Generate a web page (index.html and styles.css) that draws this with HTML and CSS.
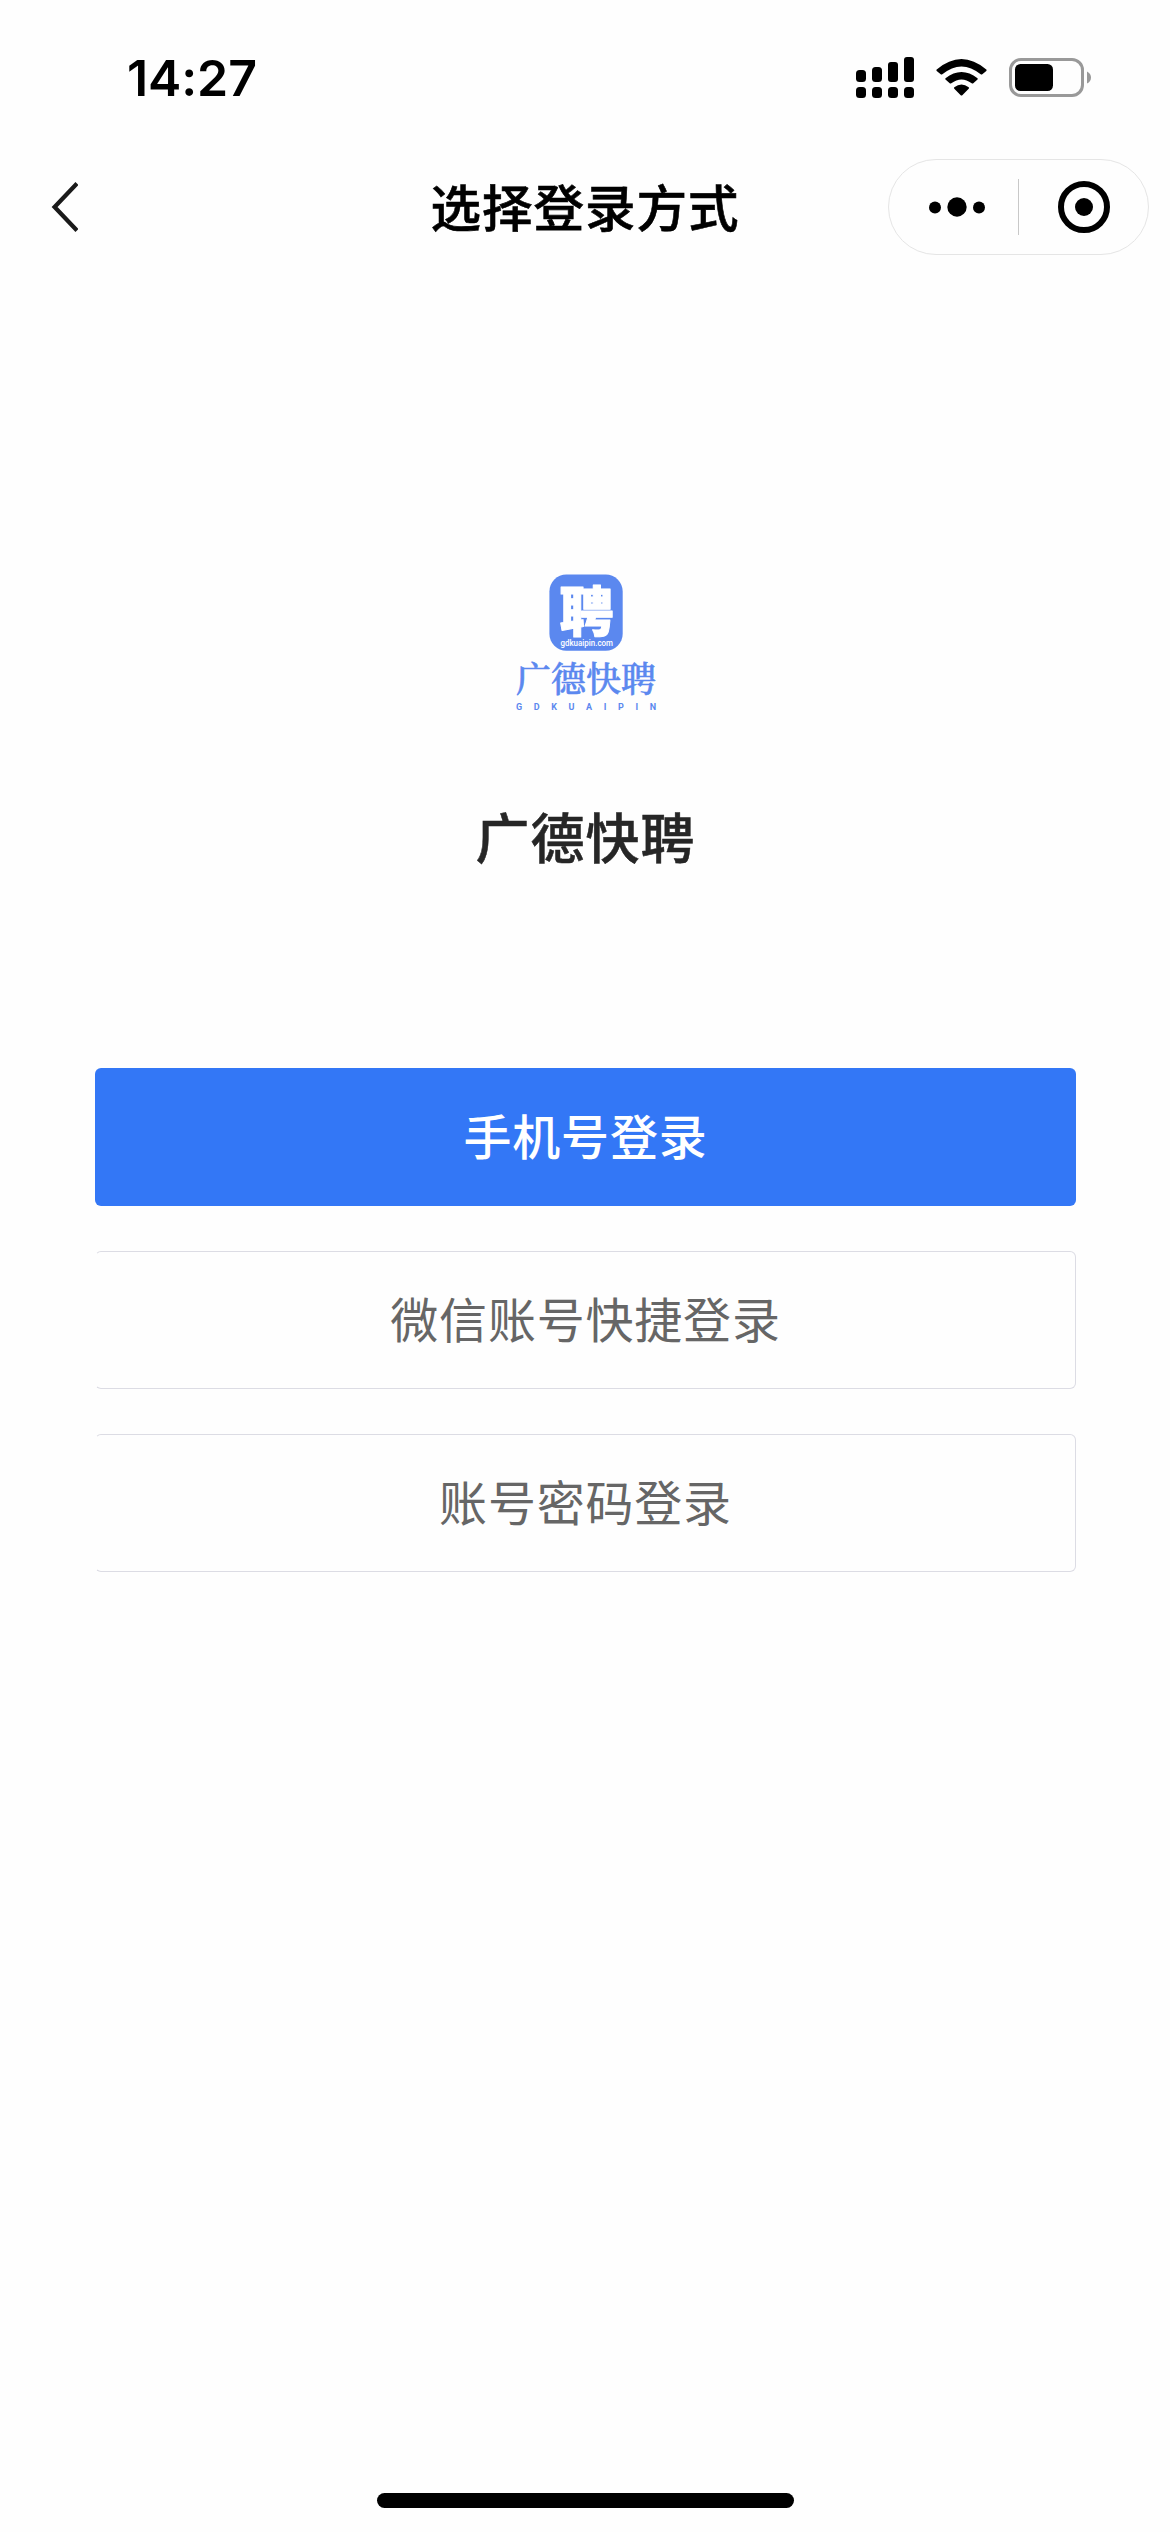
FILE: index.html
```html
<!DOCTYPE html>
<html lang="zh-CN">
<head>
<meta charset="utf-8">
<title>选择登录方式</title>
<link rel="stylesheet" href="styles.css">
</head>
<body>
<div class="screen">
  <header class="status-bar">
    <span class="time">14:27</span>
    <svg class="status-icons" width="240" height="50" viewBox="854 52 240 50">
      <g>
        <rect x="856" y="70" width="10" height="12" rx="3.5"/>
        <rect x="872" y="67" width="10" height="15" rx="3.5"/>
        <rect x="888" y="62" width="10" height="20" rx="3"/>
        <rect x="904" y="57" width="10" height="25" rx="3"/>
        <rect x="856" y="87" width="10" height="11" rx="3.5"/>
        <rect x="872" y="87" width="10" height="11" rx="3.5"/>
        <rect x="888" y="87" width="10" height="11" rx="3.5"/>
        <rect x="904" y="87" width="10" height="11" rx="3.5"/>
      </g>
      <path d="M936.7 69.5 Q961.5 48.500 986.300 69.500 Q986.900 70.200 986.300 70.900 L982.300 74.300 Q981.500 74.900 980.700 74.300 Q961.500 58.500 942.300 74.300 Q941.500 74.900 940.700 74.300 L936.700 70.900 Q936.100 70.200 936.700 69.500Z"/>
      <path d="M945.500 78.300 Q961.500 65.500 977.500 78.300 Q978.100 79 977.500 79.600 L973.300 83.300 Q972.500 83.900 971.700 83.300 Q961.500 75.500 951.300 83.300 Q950.500 83.900 949.700 83.300 L945.500 79.600 Q944.900 79 945.500 78.300Z"/>
      <path d="M954.300 87.200 Q961.500 81.800 968.700 87.200 Q969.400 88 968.700 88.700 L962.300 95.200 Q961.500 96 960.700 95.200 L954.300 88.700 Q953.600 88 954.300 87.200Z"/>
      <rect x="1010.500" y="59.500" width="72" height="36" rx="10.500" fill="none" stroke="#999" stroke-width="3"/>
      <rect x="1015" y="64" width="38" height="27" rx="5.500"/>
      <path d="M1087 71.500 Q1091 73.500 1091 77.500 Q1091 81.500 1087 83.500Z" fill="#999"/>
    </svg>
  </header>
  <nav class="nav-bar">
    <svg class="back" width="28" height="54" viewBox="50 180 28 54"><path d="M77 183.500 L54.600 207 L77 230.500" fill="none" stroke="#1a1a1a" stroke-width="4.300"/></svg>
    <h1 class="title">选择登录方式</h1>
    <div class="capsule">
      <svg class="more" width="58" height="22" viewBox="0 0 58 22"><circle cx="7" cy="11.500" r="6"/><circle cx="29" cy="11" r="9.700"/><circle cx="51" cy="11.500" r="6"/></svg>
      <span class="divider"></span>
      <svg class="close" width="54" height="54" viewBox="0 0 54 54"><circle cx="27" cy="27" r="23" fill="none" stroke="#000" stroke-width="6"/><circle cx="27" cy="27" r="9"/></svg>
    </div>
  </nav>
  <main class="login">
    <svg class="logo" width="150" height="144" viewBox="510 570 150 144">
      <rect x="548.400" y="574.400" width="73.300" height="76.300" rx="17"/>
      <text class="logo-mark" x="585.500" y="632" text-anchor="middle">聘</text>
      <text class="logo-domain" x="559.500" y="645.800" textLength="52.500" lengthAdjust="spacingAndGlyphs">gdkuaipin.com</text>
      <text class="logo-name" x="515" y="692" textLength="140">广德快聘</text>
      <text class="logo-latin" x="515" y="710" textLength="140">GDKUAIPIN</text>
    </svg>
    <h2 class="app-name">广德快聘</h2>
    <div class="actions">
      <button class="button primary">手机号登录</button>
      <button class="button">微信账号快捷登录</button>
      <button class="button">账号密码登录</button>
    </div>
  </main>
  <footer class="home"><span class="home-indicator"></span></footer>
</div>
</body>
</html>
```
FILE: styles.css
```css
* { box-sizing: border-box; }
body {
  margin: 0;
  background: #fefefe;
  font-family: "Noto Sans CJK SC", sans-serif;
}
svg { display: block; flex: none; }
.screen {
  width: 1170px;
  height: 2532px;
  display: flex;
  flex-direction: column;
}
.status-bar {
  height: 141px;
  padding: 48px 76px 0 127px;
  display: flex;
  justify-content: space-between;
  align-items: flex-start;
}
.time {
  font: 600 50px/60px Inter, sans-serif;
  letter-spacing: -0.1px;
}
.status-icons { margin-top: 4px; }
.nav-bar {
  height: 132px;
  padding: 0 21px 0 50px;
  display: grid;
  grid-template-columns: 261px 1fr 261px;
  align-items: center;
}
.title {
  margin: 0 0 4px -29px;
  text-align: center;
  font-size: 50.5px;
  font-weight: 500;
  -webkit-text-stroke: 0.6px #000;
  letter-spacing: 1px;
  line-height: 72px;
}
.capsule {
  height: 96px;
  border: 1px solid #e5e5e5;
  border-radius: 48px;
  display: flex;
  align-items: center;
  padding: 0 36px 0 39px;
}
.divider {
  width: 1px;
  height: 56px;
  background: #c8c8c8;
  margin: 0 38px 0 32px;
}
.login {
  flex: 1;
  padding: 297px 94px 0 95px;
  display: flex;
  flex-direction: column;
  align-items: center;
}
.logo { fill: #5b88ef; }
.logo-mark {
  fill: #fff;
  stroke: #fff;
  stroke-width: 1px;
  stroke-linejoin: round;
  font-size: 54px;
  font-weight: 900;
}
.logo-domain { fill: #fff; font: 500 9px Roboto, sans-serif; }
.logo-name {
  font-family: "Noto Serif CJK SC", "Noto Sans CJK SC", serif;
  font-size: 35px;
  font-weight: 500;
  stroke: #5b88ef;
  stroke-width: 0.6px;
}
.logo-latin { font: 700 9px Roboto, sans-serif; }
.app-name {
  margin: 82px 0 0;
  font-size: 54px;
  font-weight: 500;
  -webkit-text-stroke: 0.5px #262626;
  line-height: 80px;
  letter-spacing: 1px;
  color: #262626;
}
.actions {
  width: 100%;
  margin-top: 192px;
  display: flex;
  flex-direction: column;
  gap: 45px;
}
.button {
  height: 138px;
  padding: 0 0 7px;
  border: 1px solid #dcdce4;
  border-left-color: transparent;
  border-radius: 6px;
  background: transparent;
  color: #666;
  font: 400 48px "Noto Sans CJK SC", sans-serif;
  letter-spacing: 0.8px;
}
.primary {
  border: 0;
  background: #3377f6;
  color: #fff;
  font-weight: 500;
}
.home {
  height: 39px;
  display: flex;
  justify-content: center;
}
.home-indicator {
  width: 417px;
  height: 15px;
  border-radius: 8px;
  background: #000;
}
```
